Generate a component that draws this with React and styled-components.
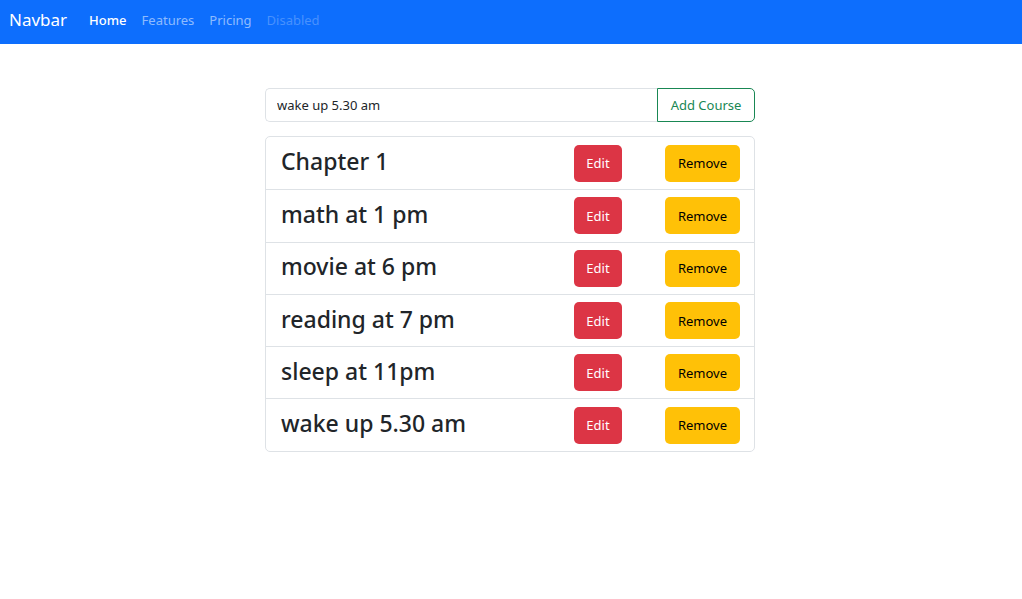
import React, { useState } from "react";
import styled, { createGlobalStyle } from "styled-components";

const GlobalStyle = createGlobalStyle`
  body {
    margin: 0;
    font-family: "Noto Sans", "Open Sans", sans-serif;
    color: #212529;
    background: #fff;
  }
  * { box-sizing: border-box; }
`;

const Nav = styled.nav`
  height: 44px;
  background-color: #0d6efd;
  display: flex;
  align-items: center;
  padding: 0 9px 5px;
`;

const Brand = styled.a`
  color: #fff;
  font-size: 17px;
  margin-right: 22px;
  text-decoration: none;
`;

const NavLink = styled.a`
  color: ${(p) =>
    p.active ? "#fff" : p.disabled ? "rgba(255,255,255,0.25)" : "rgba(255,255,255,0.55)"};
  font-size: 13px;
  font-weight: ${(p) => (p.active ? 500 : 400)};
  margin-right: 15px;
  text-decoration: none;
`;

const Container = styled.div`
  width: 490px;
  margin: 44px 0 0 calc(50% - 246px);
`;

const InputGroup = styled.div`
  display: flex;
  height: 34px;
  margin-bottom: 14px;
`;

const Input = styled.input`
  flex: 1;
  border: 1px solid #dee2e6;
  border-right: none;
  border-radius: 5px 0 0 5px;
  padding: 0 11px;
  font-family: inherit;
  font-size: 13px;
  color: #212529;
  outline: none;
`;

const AddButton = styled.button`
  width: 98px;
  border: 1px solid #198754;
  border-radius: 0 5px 5px 0;
  background: #fff;
  color: #198754;
  font-family: inherit;
  font-size: 13px;
  cursor: pointer;
`;

const List = styled.ul`
  list-style: none;
  margin: 0;
  padding: 0;
  border: 1px solid #dee2e6;
  border-radius: 5px;
`;

const Item = styled.li`
  display: flex;
  align-items: center;
  height: 52.3px;
  padding: 0 14px 0 15px;
  border-top: ${(p) => (p.first ? "none" : "1px solid #dee2e6")};
`;

const Title = styled.h4`
  flex: 1;
  margin: 0 0 2px;
  font-size: 23px;
  font-weight: 500;
  line-height: 1.2;
`;

const Button = styled.button`
  height: 37px;
  width: ${(p) => p.width}px;
  margin-left: ${(p) => p.gap || 0}px;
  border: none;
  border-radius: 5px;
  background: ${(p) => p.bg};
  color: ${(p) => p.fg};
  font-family: inherit;
  font-size: 13px;
  cursor: pointer;
`;

const courses = [
  "Chapter 1",
  "math at 1 pm",
  "movie at 6 pm",
  "reading at 7 pm",
  "sleep at 11pm",
  "wake up 5.30 am",
];

export default function App() {
  const [value, setValue] = useState("wake up 5.30 am");
  return (
    <>
      <GlobalStyle />
      <Nav>
        <Brand href="#">Navbar</Brand>
        <NavLink active href="#">Home</NavLink>
        <NavLink href="#">Features</NavLink>
        <NavLink href="#">Pricing</NavLink>
        <NavLink disabled>Disabled</NavLink>
      </Nav>
      <Container>
        <InputGroup>
          <Input value={value} onChange={(e) => setValue(e.target.value)} />
          <AddButton>Add Course</AddButton>
        </InputGroup>
        <List>
          {courses.map((c, i) => (
            <Item key={c} first={i === 0}>
              <Title>{c}</Title>
              <Button width={48} bg="#dc3545" fg="#fff">Edit</Button>
              <Button width={75} gap={43} bg="#ffc107" fg="#000">Remove</Button>
            </Item>
          ))}
        </List>
      </Container>
    </>
  );
}
